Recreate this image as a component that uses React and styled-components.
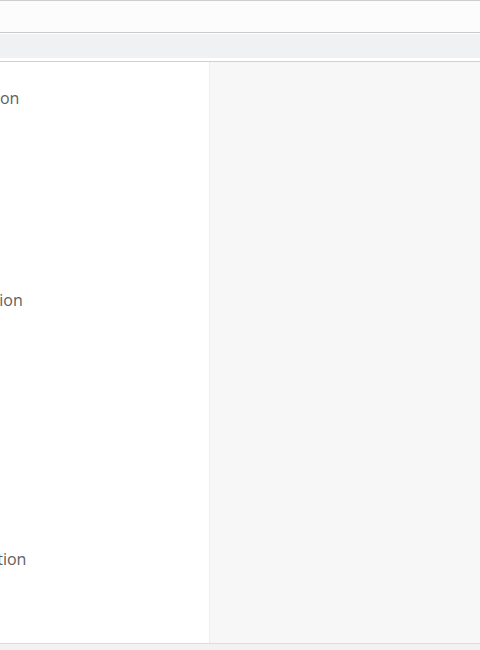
import React from "react";
import styled, { createGlobalStyle } from "styled-components";

const GlobalStyle = createGlobalStyle`
  html, body {
    margin: 0;
    padding: 0;
    background: #ffffff;
  }
  body {
    font-family: "Open Sans", "Liberation Sans", sans-serif;
  }
`;

const Page = styled.div`
  display: flex;
  flex-direction: column;
  width: 480px;
  height: 650px;
  overflow: hidden;
`;

const TopBar = styled.div`
  height: 31px;
  background: #fcfcfc;
  border-top: 1px solid #cfcfcf;
  border-bottom: 1px solid #c9c9c9;
`;

const SubBar = styled.div`
  padding: 1px 0 3px;
  background: #ffffff;
  border-bottom: 1px solid #d2d2d2;
`;

const Band = styled.div`
  height: 24px;
  background: #f0f1f3;
`;

const Main = styled.div`
  flex: 1;
  display: flex;
  min-height: 0;
`;

const Sidebar = styled.div`
  width: 209px;
  background: #ffffff;
  border-right: 1px solid #ededed;
  display: flex;
  flex-direction: column;
  padding-top: 25px;
  overflow: hidden;
`;

const Content = styled.div`
  flex: 1;
  background: #f7f7f7;
`;

const Label = styled.div`
  font-size: 16px;
  line-height: 22px;
  font-weight: 500;
  color: #5e5e5e;
  white-space: nowrap;
  margin-left: ${(p) => p.$shift}px;
  margin-top: ${(p) => p.$gap}px;
`;

const Footer = styled.div`
  height: 6px;
  background: #f2f2f2;
  border-top: 1px solid #dcdcdc;
`;

const sections = [
  { text: "Option", shift: -32, gap: 0 },
  { text: "Navigation", shift: -57, gap: 180 },
  { text: "Description", shift: -59, gap: 237 },
];

export default function App() {
  return (
    <Page>
      <GlobalStyle />
      <TopBar />
      <SubBar>
        <Band />
      </SubBar>
      <Main>
        <Sidebar>
          {sections.map((s) => (
            <Label key={s.text} $shift={s.shift} $gap={s.gap}>
              {s.text}
            </Label>
          ))}
        </Sidebar>
        <Content />
      </Main>
      <Footer />
    </Page>
  );
}
